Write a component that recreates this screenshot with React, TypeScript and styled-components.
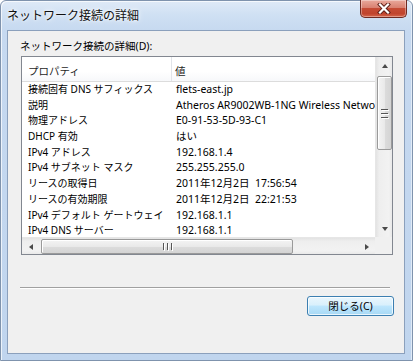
import React from 'react'
import styled, { createGlobalStyle } from 'styled-components'

const GlobalStyle = createGlobalStyle`
	html, body {
		margin: 0;
		padding: 0;
		background: #ffffff;
	}
	body {
		font-family: "Noto Sans", "Noto Sans CJK JP", sans-serif;
		color: #000;
	}
`

const StyledWindow = styled.div`
	width: 413px;
	height: 361px;
	box-sizing: border-box;
	display: flex;
	flex-direction: column;
	border: 1px solid #7f93ad;
	border-radius: 6px 6px 0 0;
	padding: 0 7px 6px 6px;
	background: linear-gradient(to bottom, #dfeaf7 0px, #cfe0f3 14px, #c6d9f0 30px, #c0d5ee 100%);
	box-shadow: inset 1px 1px 0 rgba(255, 255, 255, 0.7), inset -1px 0 0 rgba(255, 255, 255, 0.5);
`

const StyledTitleBar = styled.div`
	height: 29px;
	display: flex;
	align-items: flex-start;
	justify-content: space-between;
`

const StyledTitle = styled.span`
	margin-top: 6px;
	font-family: "Noto Sans CJK JP", sans-serif;
	font-size: 12px;
	line-height: 16px;
	color: #111;
	text-shadow: 0 0 6px #ffffff, 0 0 3px #ffffff;
`

const StyledCloseButton = styled.div`
	width: 47px;
	height: 18px;
	margin-top: -1px;
	margin-right: -2px;
	box-sizing: border-box;
	display: flex;
	align-items: center;
	justify-content: center;
	border: 1px solid #6e2a22;
	border-top: none;
	border-radius: 0 0 5px 5px;
	background: linear-gradient(to bottom, #e9a99c 0%, #d98171 45%, #c54b35 50%, #c0442d 80%, #d6664c 100%);
	box-shadow: inset 0 0 0 1px rgba(255, 255, 255, 0.35);
`

const StyledClient = styled.div`
	flex: 1;
	display: flex;
	flex-direction: column;
	background: #f0f0f0;
	border: 1px solid #8ba0bc;
	padding: 7px 10px 0 12px;
`

const StyledLabel = styled.div`
	font-size: 10.5px;
	line-height: 16px;
	height: 16px;
	color: #000;
`

const StyledListBox = styled.div`
	margin: 2px 0 0 1px;
	width: 372px;
	height: 199px;
	box-sizing: border-box;
	border: 1px solid #828790;
	background: #ffffff;
	display: grid;
	grid-template-columns: 353px 17px;
	grid-template-rows: 180px 17px;
`

const StyledViewport = styled.div`
	overflow: hidden;
`

const StyledHeader = styled.div`
	display: grid;
	grid-template-columns: 150px 1fr;
	height: 24px;
	border-bottom: 1px solid #dcdcdc;
	background: linear-gradient(to bottom, #ffffff 0%, #ffffff 60%, #f7f8fa 100%);
`

const StyledHeaderCell = styled.div<{ $divider?: boolean }>`
	padding: 6px 0 0 ${p => (p.$divider ? '3px' : '6px')};
	font-size: 10.5px;
	line-height: 16px;
	color: #1e1e1e;
	white-space: nowrap;
	border-right: ${p => (p.$divider ? 'none' : '1px solid #e1e4e9')};
`

const StyledRow = styled.div`
	display: grid;
	grid-template-columns: 150px 1fr;
	height: 15.7px;
	align-items: center;
`

const StyledCell = styled.div<{ $value?: boolean }>`
	padding-left: ${p => (p.$value ? '4px' : '6px')};
	font-size: ${p => (p.$value ? '10.5px' : '10px')};
	line-height: 15.7px;
	white-space: pre;
	color: #000;
`

const StyledVScroll = styled.div`
	display: flex;
	flex-direction: column;
	background: linear-gradient(to right, #e3e3e3 0%, #eeeeee 20%, #f2f2f2 80%, #e9e9e9 100%);
	border-left: 1px solid #e6e6e6;
`

const StyledHScroll = styled.div`
	display: flex;
	align-items: stretch;
	background: linear-gradient(to bottom, #e3e3e3 0%, #eeeeee 20%, #f2f2f2 80%, #e9e9e9 100%);
	border-top: 1px solid #e6e6e6;
`

const StyledArrowBox = styled.div`
	width: 17px;
	height: 17px;
	flex: none;
	display: flex;
	align-items: center;
	justify-content: center;
`

const StyledArrow = styled.div<{ $dir: 'up' | 'down' | 'left' | 'right' }>`
	width: 0;
	height: 0;
	border-style: solid;
	border-color: transparent;
	${p => p.$dir === 'up' && 'border-width: 0 3.5px 4px 3.5px; border-bottom-color: #4a4a4a;'}
	${p => p.$dir === 'down' && 'border-width: 4px 3.5px 0 3.5px; border-top-color: #4a4a4a;'}
	${p => p.$dir === 'left' && 'border-width: 3.5px 4px 3.5px 0; border-right-color: #4a4a4a;'}
	${p => p.$dir === 'right' && 'border-width: 3.5px 0 3.5px 4px; border-left-color: #4a4a4a;'}
`

const StyledVTrack = styled.div`
	flex: 1;
	padding: 2px 1px 0 1px;
`

const StyledHTrack = styled.div`
	flex: 1;
	padding: 1px 0 1px 2px;
`

const StyledVThumb = styled.div`
	width: 15px;
	height: 74px;
	box-sizing: border-box;
	border: 1px solid #9a9a9a;
	border-radius: 2px;
	background: linear-gradient(to right, #f4f4f4 0%, #e9e9e9 50%, #dcdcdc 51%, #d4d4d4 100%);
	box-shadow: inset 1px 1px 0 #ffffff;
	display: flex;
	flex-direction: column;
	align-items: center;
	justify-content: center;
	gap: 1px;
`

const StyledHThumb = styled.div`
	width: 252px;
	height: 15px;
	box-sizing: border-box;
	border: 1px solid #9a9a9a;
	border-radius: 2px;
	background: linear-gradient(to bottom, #f4f4f4 0%, #e9e9e9 50%, #dcdcdc 51%, #d4d4d4 100%);
	box-shadow: inset 1px 1px 0 #ffffff;
	display: flex;
	align-items: center;
	justify-content: center;
	gap: 1px;
`

const StyledGripLine = styled.div<{ $horizontal?: boolean }>`
	background: #555;
	box-shadow: 1px 1px 0 #ffffff;
	${p => (p.$horizontal ? 'width: 7px; height: 1px;' : 'width: 1px; height: 7px;')}
	margin: ${p => (p.$horizontal ? '1px 0' : '0 1px')};
`

const StyledCorner = styled.div`
	background: #f0f0f0;
`

const StyledSeparator = styled.div`
	margin-top: 32px;
	width: 370px;
	border-top: 1px solid #a0a0a0;
	border-bottom: 1px solid #ffffff;
`

const StyledFooter = styled.div`
	display: flex;
	justify-content: flex-end;
	margin-top: 7px;
`

const StyledButton = styled.button`
	width: 87px;
	height: 20px;
	padding: 0;
	border: 1px solid #3c7fb1;
	border-radius: 3px;
	background: linear-gradient(to bottom, #eaf6fd 0%, #d9f0fc 45%, #bee6fd 50%, #a7d9f5 100%);
	box-shadow: inset 0 0 0 1px rgba(255, 255, 255, 0.75);
	font-family: "Noto Sans", "Noto Sans CJK JP", sans-serif;
	font-size: 10.5px;
	line-height: 16px;
	color: #000;
`

const properties: [string, string][] = [
	['接続固有 DNS サフィックス', 'flets-east.jp'],
	['説明', 'Atheros AR9002WB-1NG Wireless Network Adapter'],
	['物理アドレス', 'E0-91-53-5D-93-C1'],
	['DHCP 有効', 'はい'],
	['IPv4 アドレス', '192.168.1.4'],
	['IPv4 サブネット マスク', '255.255.255.0'],
	['リースの取得日', '2011年12月2日  17:56:54'],
	['リースの有効期限', '2011年12月2日  22:21:53'],
	['IPv4 デフォルト ゲートウェイ', '192.168.1.1'],
	['IPv4 DNS サーバー', '192.168.1.1'],
]

const CloseIcon = () => (
	<svg width="14" height="11" viewBox="0 0 14 11">
		<path d="M3 1.5 L11 9.5 M11 1.5 L3 9.5" stroke="#5a1d16" strokeWidth="4" strokeLinecap="square" />
		<path d="M3 1.5 L11 9.5 M11 1.5 L3 9.5" stroke="#ffffff" strokeWidth="2.2" strokeLinecap="square" />
	</svg>
)

const App = () => {
	return <>
		<GlobalStyle />
		<StyledWindow>
			<StyledTitleBar>
				<StyledTitle>ネットワーク接続の詳細</StyledTitle>
				<StyledCloseButton>
					<CloseIcon />
				</StyledCloseButton>
			</StyledTitleBar>
			<StyledClient>
				<StyledLabel>ネットワーク接続の詳細(D):</StyledLabel>
				<StyledListBox>
					<StyledViewport>
						<StyledHeader>
							<StyledHeaderCell>プロパティ</StyledHeaderCell>
							<StyledHeaderCell $divider>値</StyledHeaderCell>
						</StyledHeader>
						{properties.map(([name, value]) => (
							<StyledRow key={name}>
								<StyledCell>{name}</StyledCell>
								<StyledCell $value>{value}</StyledCell>
							</StyledRow>
						))}
					</StyledViewport>
					<StyledVScroll>
						<StyledArrowBox><StyledArrow $dir="up" /></StyledArrowBox>
						<StyledVTrack>
							<StyledVThumb>
								<StyledGripLine $horizontal />
								<StyledGripLine $horizontal />
								<StyledGripLine $horizontal />
							</StyledVThumb>
						</StyledVTrack>
						<StyledArrowBox><StyledArrow $dir="down" /></StyledArrowBox>
					</StyledVScroll>
					<StyledHScroll>
						<StyledArrowBox><StyledArrow $dir="left" /></StyledArrowBox>
						<StyledHTrack>
							<StyledHThumb>
								<StyledGripLine />
								<StyledGripLine />
								<StyledGripLine />
							</StyledHThumb>
						</StyledHTrack>
						<StyledArrowBox><StyledArrow $dir="right" /></StyledArrowBox>
					</StyledHScroll>
					<StyledCorner />
				</StyledListBox>
				<StyledSeparator />
				<StyledFooter>
					<StyledButton>閉じる(C)</StyledButton>
				</StyledFooter>
			</StyledClient>
		</StyledWindow>
	</>
}

export default App
